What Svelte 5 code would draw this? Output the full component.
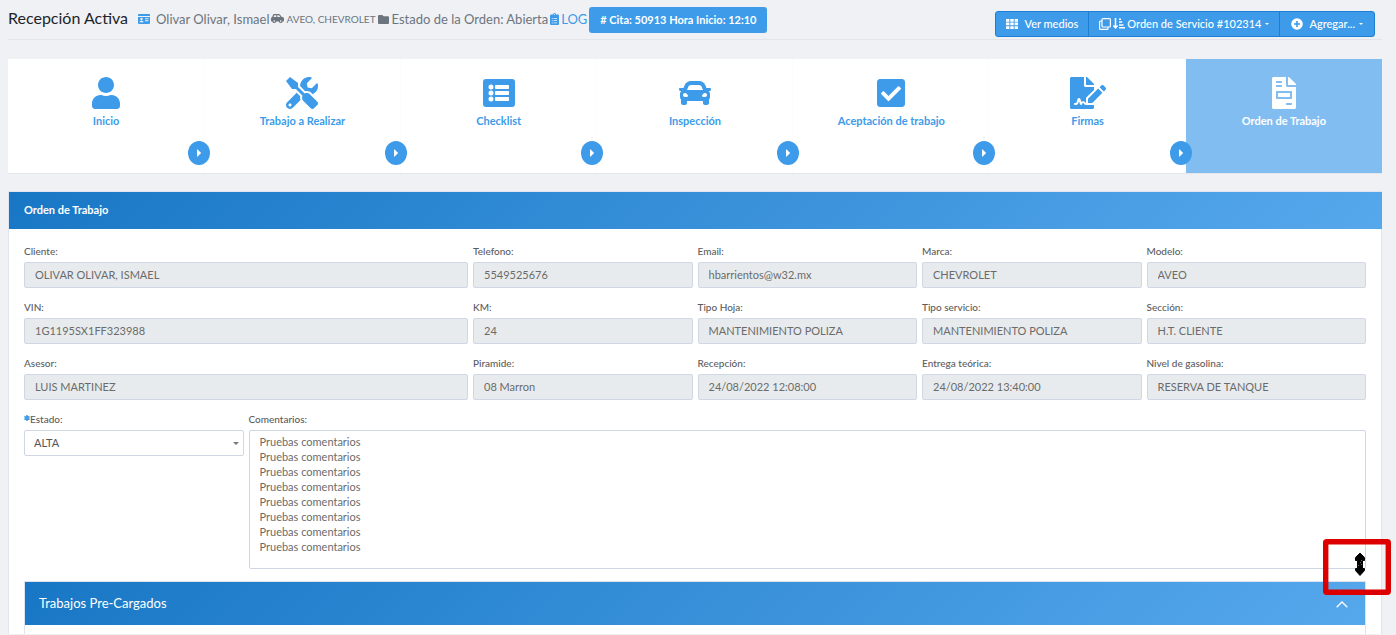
<script>
  const steps = [
    { label: 'Inicio', w: 448, d: 'M224 256c70.7 0 128-57.3 128-128S294.7 0 224 0 96 57.3 96 128s57.3 128 128 128zm89.6 32h-16.7c-22.2 10.2-46.9 16-72.9 16s-50.6-5.8-72.9-16h-16.7C60.2 288 0 348.2 0 422.4V464c0 26.5 21.5 48 48 48h352c26.5 0 48-21.5 48-48v-41.6c0-74.2-60.2-134.4-134.4-134.4z' },
    { label: 'Trabajo a Realizar', w: 512, d: 'M501.1 395.7L384 278.6c-23.1-23.1-57.6-27.6-85.4-13.9L192 158.1V96L64 0 0 64l96 128h62.1l106.6 106.6c-13.6 27.8-9.2 62.3 13.9 85.4l117.1 117.1c14.6 14.6 38.2 14.6 52.7 0l52.7-52.7c14.5-14.6 14.5-38.2 0-52.7zM331.7 225c28.3 0 54.9 11 74.9 31l19.4 19.4c15.8-6.9 30.8-16.5 43.8-29.5 37.1-37.1 49.7-89.3 37.9-136.7-2.2-9-13.5-12.1-20.1-5.5l-74.4 74.4-67.9-11.3L334 98.9l74.4-74.4c6.6-6.6 3.4-17.9-5.7-20.2-47.4-11.7-99.6.9-136.6 37.9-28.5 28.5-41.9 66.1-41.2 103.6l82.1 82.1c8.1-1.9 16.5-2.9 24.7-2.9zm-103.9 82l-56.7-56.7L18.7 402.8c-25 25-25 65.5 0 90.5s65.5 25 90.5 0l123.6-123.6c-7.6-19.9-9.9-41.6-5-62.7zM64 472c-13.2 0-24-10.8-24-24 0-13.3 10.7-24 24-24s24 10.7 24 24c0 13.2-10.7 24-24 24z' },
    { label: 'Checklist', w: 512, d: 'M464 32H48a48 48 0 0 0-48 48v352a48 48 0 0 0 48 48h416a48 48 0 0 0 48-48V80a48 48 0 0 0-48-48zM128 120a40 40 0 1 1 0 80 40 40 0 0 1 0-80zm0 96a40 40 0 1 1 0 80 40 40 0 0 1 0-80zm0 96a40 40 0 1 1 0 80 40 40 0 0 1 0-80zM204 128h200q12 0 12 12v40q0 12-12 12H204q-12 0-12-12v-40q0-12 12-12zm0 96h200q12 0 12 12v40q0 12-12 12H204q-12 0-12-12v-40q0-12 12-12zm0 96h200q12 0 12 12v40q0 12-12 12H204q-12 0-12-12v-40q0-12 12-12z' },
    { label: 'Inspección', w: 512, d: 'M499.99 176h-59.87l-16.64-41.6C406.38 91.63 365.57 64 319.5 64h-127c-46.06 0-86.88 27.63-103.99 70.4L71.87 176H12.01C4.2 176-1.53 183.34.37 190.91l6 24C7.7 220.25 12.5 224 18.01 224h20.07C24.65 235.73 16 252.78 16 272v48c0 16.12 6.16 30.67 16 41.93V416c0 17.67 14.33 32 32 32h32c17.67 0 32-14.33 32-32v-32h256v32c0 17.67 14.33 32 32 32h32c17.67 0 32-14.33 32-32v-54.07c9.84-11.25 16-25.8 16-41.93v-48c0-19.22-8.65-36.27-22.07-48H494c5.51 0 10.31-3.75 11.64-9.09l6-24c1.89-7.57-3.84-14.91-11.65-14.91zm-352.06-17.83c7.29-18.22 24.94-30.17 44.57-30.17h127c19.63 0 37.28 11.95 44.57 30.17L384 208H128l19.93-49.83zM96 319.8c-19.2 0-32-12.76-32-31.9S76.8 256 96 256s48 28.71 48 47.85-28.8 15.95-48 15.95zm320 0c-19.2 0-48 3.19-48-15.95S396.8 256 416 256s32 12.76 32 31.9-12.8 31.9-32 31.9z' },
    { label: 'Aceptación de trabajo', w: 448, d: 'M400 480H48c-26.51 0-48-21.49-48-48V80c0-26.51 21.49-48 48-48h352c26.51 0 48 21.49 48 48v352c0 26.51-21.49 48-48 48zm-204.686-98.059l184-184c6.248-6.248 6.248-16.379 0-22.627l-22.627-22.627c-6.248-6.248-16.379-6.249-22.628 0L184 302.745l-70.059-70.059c-6.248-6.248-16.379-6.248-22.628 0l-22.627 22.627c-6.248 6.248-6.248 16.379 0 22.627l104 104c6.249 6.25 16.379 6.25 22.628.001z' },
    { label: 'Firmas', w: 576, d: 'M218.17 424.14c-2.95-5.92-8.09-6.52-10.17-6.52s-7.22.59-10.02 6.19l-7.67 15.34c-6.37 12.78-25.03 11.37-29.48-2.09L144 386.59l-10.61 31.88c-5.89 17.66-22.38 29.53-41 29.53H80c-8.84 0-16-7.16-16-16s7.16-16 16-16h12.39c4.83 0 9.11-3.08 10.64-7.66l18.19-54.64c3.3-9.81 12.44-16.41 22.78-16.41s19.48 6.59 22.77 16.41l13.88 41.64c19.75-16.19 54.06-9.7 66 14.16 1.89 3.78 5.49 5.95 9.36 6.26v-82.12l128-127.09V160H248c-13.2 0-24-10.8-24-24V0H24C10.7 0 0 10.7 0 24v464c0 13.3 10.7 24 24 24h336c13.3 0 24-10.7 24-24v-40l-128-.11c-16.12-.31-30.58-9.28-37.83-23.75zM384 121.9c0-6.3-2.5-12.4-7-16.9L279.1 7c-4.5-4.5-10.6-7-17-7H256v128h128v-6.1zm-96 225.06V416h68.99l161.68-162.78-67.88-67.88L288 346.96zm280.54-179.63l-31.87-31.87c-9.94-9.94-26.07-9.94-36.01 0l-27.25 27.25 67.88 67.88 27.25-27.25c9.95-9.94 9.95-26.07 0-36.01z' },
    { label: 'Orden de Trabajo', w: 384, active: true, d: 'M288 256H96v64h192v-64zm89-151L279.1 7c-4.5-4.5-10.6-7-17-7H256v128h128v-6.1c0-6.3-2.5-12.4-7-16.9zm-153 31V0H24C10.7 0 0 10.7 0 24v464c0 13.3 10.7 24 24 24h336c13.3 0 24-10.7 24-24V160H248c-13.2 0-24-10.8-24-24zM64 72c0-4.42 3.58-8 8-8h80c4.42 0 8 3.58 8 8v16c0 4.42-3.58 8-8 8H72c-4.42 0-8-3.58-8-8V72zm0 64c0-4.42 3.58-8 8-8h80c4.42 0 8 3.58 8 8v16c0 4.42-3.58 8-8 8H72c-4.42 0-8-3.58-8-8v-16zm256 304c0 4.42-3.58 8-8 8h-80c-4.42 0-8-3.58-8-8v-16c0-4.42 3.58-8 8-8h80c4.42 0 8 3.58 8 8v16zm0-200v96c0 8.84-7.16 16-16 16H80c-8.84 0-16-7.16-16-16v-96c0-8.84 7.16-16 16-16h224c8.84 0 16 7.16 16 16z' }
  ];

  const fields = [
    { id: 'cliente', label: 'Cliente:', value: 'OLIVAR OLIVAR, ISMAEL', wide: true },
    { id: 'telefono', label: 'Telefono:', value: '5549525676' },
    { id: 'email', label: 'Email:', value: 'hbarrientos@w32.mx' },
    { id: 'marca', label: 'Marca:', value: 'CHEVROLET' },
    { id: 'modelo', label: 'Modelo:', value: 'AVEO' },
    { id: 'vin', label: 'VIN:', value: '1G1195SX1FF323988', wide: true },
    { id: 'km', label: 'KM:', value: '24' },
    { id: 'hoja', label: 'Tipo Hoja:', value: 'MANTENIMIENTO POLIZA' },
    { id: 'servicio', label: 'Tipo servicio:', value: 'MANTENIMIENTO POLIZA' },
    { id: 'seccion', label: 'Sección:', value: 'H.T. CLIENTE' },
    { id: 'asesor', label: 'Asesor:', value: 'LUIS MARTINEZ', wide: true },
    { id: 'piramide', label: 'Piramide:', value: '08 Marron' },
    { id: 'recepcion', label: 'Recepción:', value: '24/08/2022 12:08:00' },
    { id: 'entrega', label: 'Entrega teórica:', value: '24/08/2022 13:40:00' },
    { id: 'gasolina', label: 'Nivel de gasolina:', value: 'RESERVA DE TANQUE' }
  ];

  let comments = $state(Array(8).fill('Pruebas comentarios').join('\n'));
</script>

<div class="page">
  <header>
    <h1>Recepción Activa</h1>
    <div class="meta">
      <svg class="blue card" width="12" height="10" viewBox="0 0 12 10" fill="currentColor" fill-rule="evenodd"><path d="M1 0h10a1 1 0 0 1 1 1v1H0V1a1 1 0 0 1 1-1zM0 3h12v6a1 1 0 0 1-1 1H1a1 1 0 0 1-1-1zM3.500 3.800a1.200 1.200 0 1 0 0 2.400 1.200 1.200 0 0 0 0-2.400zM1.500 8.200h4q0-1.500-1.300-1.500H2.800q-1.300 0-1.300 1.500zM7 4.300v.9h3.500v-.9zM7 6.300v.9h3.500v-.9z"/></svg>
      <span>Olivar Olivar, Ismael</span>
      <svg width="13" height="10" viewBox="0 0 13 10" fill="currentColor" fill-rule="evenodd"><path d="M3.200 0h4.600q.8 0 1.300.7L10.800 3h.7Q13 3.200 13 4.700v2q0 .8-.8.8h-.5a2 2 0 0 1-3.900 0H5.200a2 2 0 0 1-3.900 0H.8Q0 7.500 0 6.700V4.500Q0 3.300 1.200 3L2 .8Q2.300 0 3.200 0zM3.300 1.200L2.600 3h2.700V1.200zM6.300 1.200V3h3L8 1.200zM3.250 6.300a.8.8 0 1 0 0 1.600.8.8 0 0 0 0-1.600zM9.750 6.300a.8.8 0 1 0 0 1.600.8.8 0 0 0 0-1.600z"/></svg>
      <small>AVEO, CHEVROLET</small>
      <svg class="folder" width="11" height="9" viewBox="0 0 11 9" fill="currentColor"><path d="M1 0h3.300l1.400 1.300H10a1 1 0 0 1 1 1V8a1 1 0 0 1-1 1H1a1 1 0 0 1-1-1V1a1 1 0 0 1 1-1z"/></svg>
      <span>Estado de la Orden: Abierta</span>
      <a href="#log">
        <svg width="9" height="12" viewBox="0 0 384 512" fill="currentColor" fill-rule="evenodd"><path d="M336 64h-80a64 64 0 0 0-128 0H48a48 48 0 0 0-48 48v352a48 48 0 0 0 48 48h288a48 48 0 0 0 48-48V112a48 48 0 0 0-48-48zM96 400a24 24 0 1 1 0 48 24 24 0 0 1 0-48zm0-96a24 24 0 1 1 0 48 24 24 0 0 1 0-48zm0-96a24 24 0 1 1 0 48 24 24 0 0 1 0-48zm96-168a24 24 0 1 1 0 48 24 24 0 0 1 0-48zM152 216h152v28H152zm0 96h152v28H152zm0 96h152v28H152z"/></svg>LOG</a>
      <button class="cita"># Cita: 50913 Hora Inicio: 12:10</button>
    </div>
    <div class="group">
      <button>
        <svg width="12" height="10" viewBox="0 0 12 10" fill="currentColor"><path d="M0 0h3.400v2.700H0zM4.300 0h3.400v2.700H4.300zM8.600 0H12v2.700H8.600zM0 3.600h3.400v2.700H0zM4.300 3.600h3.400v2.700H4.300zM8.600 3.600H12v2.700H8.600zM0 7.300h3.400V10H0zM4.300 7.300h3.400V10H4.300zM8.600 7.300H12V10H8.600z"/></svg>
        <span>Ver medios</span>
      </button>
      <button class="orden">
        <svg width="12" height="12" viewBox="0 0 12 12" fill="none" stroke="currentColor" stroke-width="1.200"><rect x="3" y=".6" width="8.400" height="8.400" rx="1"/><path d="M3 3H1.600q-1 0-1 1v6.400q0 1 1 1H8q1 0 1-1V9"/></svg>
        <svg width="12" height="11" viewBox="0 0 12 11" fill="none" stroke="currentColor" stroke-width="1.500"><path d="M2.500 0v9.500M.4 7.500l2.100 2.400 2.100-2.400M6 1.200h2M6 4h3.200M6 6.900h4.500M6 9.800h6"/></svg>
        <span>Orden de Servicio #102314</span><i class="caret"></i>
      </button>
      <button class="add">
        <svg width="12" height="12" viewBox="0 0 12 12"><circle cx="6" cy="6" r="5.800" fill="currentColor"/><path d="M6 3v6M3 6h6" stroke="#3d9be9" stroke-width="1.600"/></svg>
        <span>Agregar...</span><i class="caret"></i>
      </button>
    </div>
  </header>

  <nav class="steps">
    {#each steps as s, i}
      <a href="#paso-{i + 1}" class="step" class:active={s.active}>
        <svg height="32" viewBox="0 0 {s.w} 512" fill="currentColor" fill-rule="evenodd"><path d={s.d} /></svg>
        <span>{s.label}</span>
        {#if !s.active}
          <b class="next"><svg width="4" height="8" viewBox="0 0 4 8" fill="currentColor"><path d="M0 .8Q0 0 .6.5L3.700 3.500q.5.500 0 1L.6 7.500Q0 8 0 7.200z"/></svg></b>
        {/if}
      </a>
    {/each}
  </nav>

  <section class="panel">
    <h2>Orden de Trabajo</h2>
    <div class="body">
      <div class="grid">
        {#each fields as f}
          <div class="field" class:wide={f.wide}>
            <label for={f.id}>{f.label}</label>
            <input id={f.id} value={f.value} disabled />
          </div>
        {/each}
        <div class="field">
          <label for="estado"><svg width="6" height="9" viewBox="0 0 6 9" stroke="#3d9be9" stroke-width="1.500"><path d="M3 3v6M.4 4.500l5.200 3M5.600 4.500l-5.200 3"/></svg>Estado:</label>
          <div class="select">
            <select id="estado"><option>ALTA</option></select>
            <i class="caret"></i>
          </div>
        </div>
        <div class="field comments">
          <label for="comentarios">Comentarios:</label>
          <textarea id="comentarios" bind:value={comments}></textarea>
          <svg class="mark" width="68" height="56" viewBox="0 0 68 56" aria-hidden="true">
            <rect x="2.700" y="2.700" width="62.600" height="50.600" rx="1" fill="none" stroke="#dc0000" stroke-width="5.400" stroke-linejoin="round"/>
            <path d="M37 14l4.500 4.500v3h-2v8h2v2L37 36.500l-4.500-5v-2h2v-8h-2v-3z" fill="#000" stroke="#000" stroke-linejoin="round"/>
            <path d="M35 27l1-1M37 24l1-1M38 22l1-1M38 26l1-1" stroke="#888" stroke-width=".8"/>
          </svg>
        </div>
      </div>

      <section class="inner">
        <h3>Trabajos Pre-Cargados
          <button aria-label="Contraer"><svg width="12" height="7" viewBox="0 0 12 7" fill="none" stroke="currentColor" stroke-width="1.300"><path d="M.7 6.300L6 1l5.300 5.300"/></svg></button>
        </h3>
        <div class="inner-body"></div>
      </section>
    </div>
  </section>
</div>

<style>
  :global(body) { margin: 0; background: #f0f1f5; }
  .page { padding: 0 14px 0 8px; font-family: "Lato", "Open Sans", sans-serif; font-size: 11px; color: #6c757d; }
  * { box-sizing: border-box; }
  svg { flex: none; }
  button, input, select, textarea { font: inherit; }
  h1, h2, h3 { margin: 0; }

  header { display: flex; align-items: center; height: 40px; border-bottom: 1px solid #e3e5ea; }
  h1 { font-size: 16px; font-weight: 400; color: #212529; margin: 0 10px 4px 0; white-space: nowrap; }
  .meta { display: flex; align-items: center; font-size: 13px; white-space: nowrap; gap: 2px; }
  .meta small { font-size: 10px; }
  .card { margin-right: 4px; }
  .folder { margin-right: 1px; }
  .blue, .meta a { color: #3d9be9; }
  .meta a { display: flex; align-items: center; gap: 2px; text-decoration: none; }
  .meta > :not(button) { margin-bottom: 2px; }
  .meta > svg { margin-bottom: 1px; }
  .cita { height: 26px; width: 178px; padding: 0; border: 0; border-radius: 3px; background: #3d9be9; color: #fff; font-size: 11px; font-weight: 700; }
  .group { display: flex; margin: 8px 7px 0 auto; }
  .group button { display: flex; align-items: center; justify-content: center; height: 26px; padding: 0 10px; border: 1px solid #1c7fd4; background: #3d9be9; color: #fff; font-size: 11px; font-weight: 500; white-space: nowrap; gap: 6px; }
  .group button + button { margin-left: -1px; }
  .group .orden { gap: 2px; }
  .group .add { padding: 0 11px; }
  .group button:first-child { border-radius: 3px 0 0 3px; }
  .group button:last-child { border-radius: 0 3px 3px 0; }
  .caret { width: 0; height: 0; border: 2px solid transparent; border-top-color: currentColor; border-bottom: 0; margin-left: 2px; }
  .add .caret { margin-left: -2px; }

  .steps { display: grid; grid-template-columns: repeat(7, 1fr); height: 115px; margin-top: 19px; background: #fff; border-bottom: 1px solid #e3e6ea; }
  .step { position: relative; display: flex; flex-direction: column; align-items: center; gap: 4px; padding-top: 18px; color: #3d9be9; font-size: 11px; line-height: 16px; font-weight: 700; text-decoration: none; box-shadow: inset -1px 0 #fcfcfc; }
  .active { background: #82bdf1; color: #fff; box-shadow: none; }
  .next { position: absolute; z-index: 1; right: -6px; bottom: 8px; display: flex; align-items: center; justify-content: center; width: 22px; height: 24px; border-radius: 50%; background: #3d9be9; color: #fff; }

  .panel { margin-top: 17px; border: 1px solid #e1e5ef; border-bottom: 0; background: #fff; }
  h2, h3 { background: linear-gradient(135deg, #1877c5, #56a8ec); color: #fff; }
  h2 { height: 37px; padding: 0 15px; font-size: 11px; line-height: 35px; font-weight: 700; margin-right: -1px; }
  .body { padding: 15px 15px 0; }
  .grid { display: grid; grid-template-columns: repeat(6, 1fr); column-gap: 5px; row-gap: 12px; }
  .field { position: relative; display: flex; flex-direction: column; min-width: 0; }
  .wide { grid-column: span 2; }
  .comments { grid-column: span 5; }
  label { display: flex; font-size: 10px; line-height: 14px; height: 18px; font-weight: 500; color: #5c5c5c; }
  input, select, textarea { width: 100%; border: 1px solid #cfd6e4; border-radius: 2px; padding: 0 10px 2px; font-size: 11px; color: #6b6b6b; background: #fff; }
  input { height: 26px; background: #e8ebed; }
  .select { position: relative; }
  select { display: block; height: 26px; padding: 0 9px 2px; appearance: none; color: #555; }
  .select .caret { position: absolute; right: 5px; top: 12px; border-width: 3px; border-bottom: 0; color: #777; }
  textarea { display: block; height: 139px; padding: 3px 10px; line-height: 15px; resize: none; }
  .mark { position: absolute; z-index: 2; right: -25px; bottom: -26px; }
  .inner { margin-top: 12px; border: 1px solid #dfe3ee; border-bottom: 0; }
  h3 { display: flex; align-items: center; justify-content: space-between; height: 43px; padding: 0 15px 2px 14px; font-size: 13px; font-weight: 400; }
  h3 button { padding: 0; border: 0; background: none; color: #fff; margin-right: 2px; }
  .inner-body { height: 9px; }
</style>
